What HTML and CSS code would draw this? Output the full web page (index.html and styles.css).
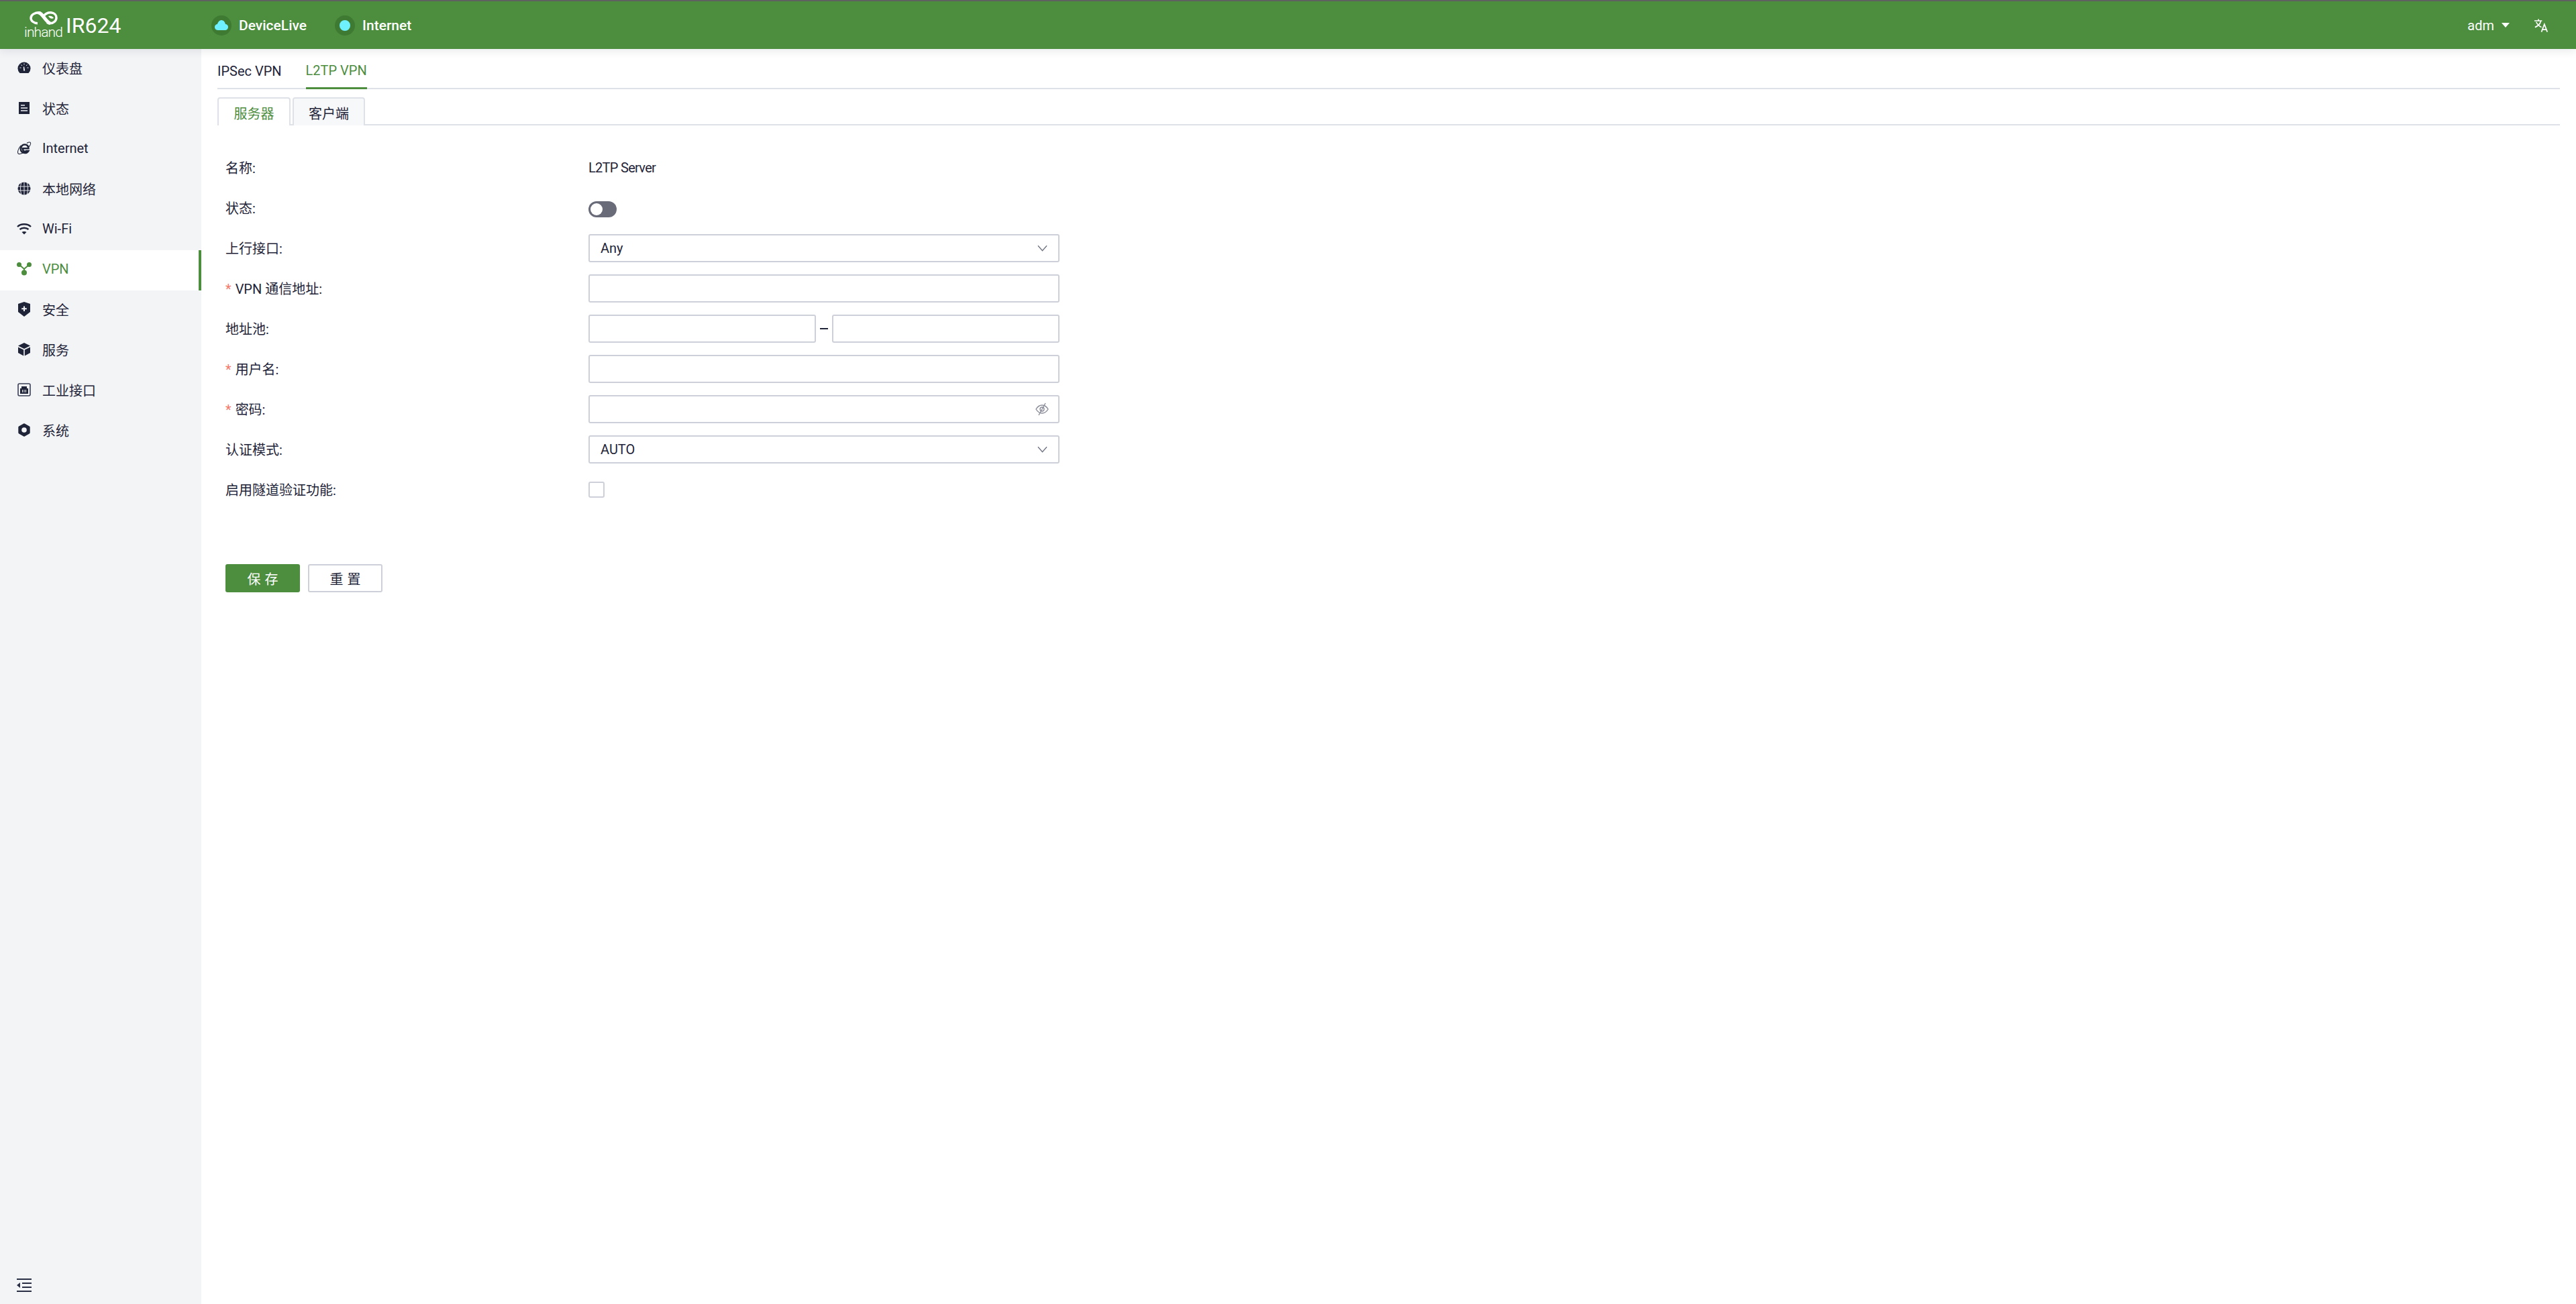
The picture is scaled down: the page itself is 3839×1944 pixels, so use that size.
FILE: index.html
```html
<!DOCTYPE html>
<html lang="zh-CN">
<head>
  <meta charset="UTF-8" />
  <title>IR624</title>
  <link rel="stylesheet" href="styles.css">
</head>
<body>
  <header class="topbar">
    <div class="brand">
      <div class="brand-mark">
        <svg class="brand-knot" viewBox="0 0 42 20" fill="none" stroke="#fff">
          <path d="M15 1.8C8 1.5 2 5 2 10C2 14 6 17.5 12 17.8" stroke-width="3.4"/>
          <path d="M12 1.5C20 2 23 15 31 18" stroke-width="5"/>
          <path d="M21 7C24 3 28 1.5 32 1.8C37 2.2 40 5.5 40 9.5C40 14 36 17.6 31 17.8C29 17.8 27.5 17.4 26 16.5" stroke-width="3.4"/>
          <path d="M28 7C32 6 35 7.5 36 10C33 11.5 30 10.5 28 7Z" fill="#fff" stroke="none"/>
        </svg>
        <span class="brand-word">inhand</span>
      </div>
      <span class="brand-name">IR624</span>
    </div>
    <div class="top-link">
      <span class="top-dot">
        <svg viewBox="0 0 20 16" width="20" height="16"><path d="M5 15 C1 15 0 12 0 10 C0 8 2 6 4 6 C5 2 8 0 10 0 C13 0 15 2 16 6 C18 6 20 8 20 10 C20 13 18 15 15 15Z" fill="#6ff0ff"/></svg>
      </span>
      <span>DeviceLive</span>
    </div>
    <div class="top-link">
      <span class="top-dot"><span class="top-dot-inner"></span></span>
      <span>Internet</span>
    </div>
    <div class="top-right">
      <span class="user">adm</span>
      <span class="caret"></span>
      <svg class="lang" viewBox="0 0 24 22" fill="none" stroke="#fff" stroke-width="1.9">
        <path d="M0 3H13M7 0V3M11 3C10 8 6 12 1 14M3 5C5 9 8 12 12 14"/>
        <path d="M12 22L17 9L22 22M14 18H20" stroke-width="2"/>
      </svg>
    </div>
  </header>

  <div class="layout">
    <aside class="sidebar">
      <nav class="menu">
        <a class="menu-item">
          <svg class="menu-icon" viewBox="0 0 20 20"><path d="M3.5 18A9.5 9.5 0 1 1 16.5 18Z" fill="#1f2438"/><path d="M10 3.5V5.5M3.5 10H5.5M14.5 10H16.5M5.5 5.5L7 7M14.5 5.5L13 7" stroke="#f3f4f6" stroke-width="1"/><path d="M8.8 9L10 8L11.2 14.5H9.2Z" fill="#f3f4f6"/></svg>
          <span>仪表盘</span>
        </a>
        <a class="menu-item">
          <svg class="menu-icon" viewBox="0 0 20 20"><rect x="2" y="1" width="16" height="18" fill="#1f2438"/><path d="M5 6H11M5 10H15M5 14H15" stroke="#f3f4f6" stroke-width="1.6"/></svg>
          <span>状态</span>
        </a>
        <a class="menu-item">
          <svg class="menu-icon" viewBox="0 0 20 20" fill="none"><path d="M6.5 10.2H16.5C16.5 6.5 14 4.5 11 4.5C7.5 4.5 4.8 7.3 4.8 11C4.8 14.7 7.5 17 11 17C13.4 17 15.2 16 16.3 14H13C12.5 14.6 11.8 14.9 11 14.9C9.2 14.9 8 13.4 8 11" stroke="#1f2438" stroke-width="2.6"/><path d="M5 6C2 10 0 15 .8 17.5C1.6 19.5 5 18.5 8 17M14 2.5C16 1 18.8 .3 19.4 1.8C20 3 19 6 17 8" stroke="#1f2438" stroke-width="1.1"/></svg>
          <span>Internet</span>
        </a>
        <a class="menu-item">
          <svg class="menu-icon" viewBox="0 0 20 20"><circle cx="10" cy="10" r="9.5" fill="#1f2438"/><path d="M0 7H20M0 13H20M10 0V20M6 1C4 6 4 14 6 19M14 1C16 6 16 14 14 19" stroke="#f3f4f6" stroke-width=".9" fill="none"/></svg>
          <span>本地网络</span>
        </a>
        <a class="menu-item">
          <svg class="menu-icon" viewBox="0 0 22 18" fill="none" stroke="#1f2438" stroke-width="2.4"><path d="M1 6C6 1 16 1 21 6M4.5 10C8 7 14 7 17.5 10"/><path d="M7.5 14L11 17.5L14.5 14C12.5 12.5 9.5 12.5 7.5 14Z" fill="#1f2438" stroke="none"/></svg>
          <span>Wi-Fi</span>
        </a>
        <a class="menu-item active">
          <svg class="menu-icon" viewBox="0 0 22 20" fill="#4c8d3e"><circle cx="3.5" cy="3.5" r="3.5"/><circle cx="18.5" cy="3.5" r="3.5"/><circle cx="11" cy="15.5" r="4"/><path d="M3.5 3.5L11 10L18.5 3.5M11 10V15" stroke="#4c8d3e" stroke-width="2" fill="none"/></svg>
          <span>VPN</span>
        </a>
        <a class="menu-item">
          <svg class="menu-icon tall" viewBox="0 0 20 22"><path d="M10 0L19 3V15L10 22L1 15V3Z" fill="#1f2438"/><path d="M10 6.5V14M6.2 10.2H13.8" stroke="#f3f4f6" stroke-width="2"/></svg>
          <span>安全</span>
        </a>
        <a class="menu-item">
          <svg class="menu-icon" viewBox="0 0 20 20"><path d="M10 0L19 4.5L10 9L1 4.5Z" fill="#1f2438"/><path d="M1 6.5L9.2 10.5V19.5L1 15Z" fill="#1f2438"/><path d="M19 6.5L10.8 10.5V19.5L19 15Z" fill="#1f2438"/></svg>
          <span>服务</span>
        </a>
        <a class="menu-item">
          <svg class="menu-icon" viewBox="0 0 20 20"><rect x="1" y="1" width="18" height="18" rx="2" fill="none" stroke="#3a3f55" stroke-width="1.6"/><path d="M4 8H6V5H14V8H16V16H4Z" fill="#1f2438"/><path d="M7.5 10V14M10 10V14M12.5 10V14" stroke="#f3f4f6" stroke-width="1"/></svg>
          <span>工业接口</span>
        </a>
        <a class="menu-item">
          <svg class="menu-icon" viewBox="0 0 20 20"><path d="M10 2L17 6V14L10 18L3 14V6Z" fill="#1f2438" stroke="#1f2438" stroke-width="3.4" stroke-linejoin="round"/><circle cx="10" cy="10" r="3.8" fill="#f3f4f6"/></svg>
          <span>系统</span>
        </a>
      </nav>
      <div class="collapse">
        <svg viewBox="0 0 22 20" width="22" height="20" fill="#2a2f45"><rect width="22" height="2"/><rect x="8" y="6" width="14" height="2"/><rect x="8" y="12" width="14" height="2"/><rect y="18" width="22" height="2"/><path d="M0 10L5 6V14Z"/></svg>
      </div>
    </aside>

    <main class="content">
      <div class="tabs">
        <span class="tab">IPSec VPN</span>
        <span class="tab current">L2TP VPN</span>
      </div>
      <div class="subtabs">
        <span class="subtab current">服务器</span>
        <span class="subtab">客户端</span>
      </div>

      <form class="form">
        <div class="row">
          <label class="label">名称:</label>
          <div class="field value">L2TP Server</div>
        </div>
        <div class="row">
          <label class="label">状态:</label>
          <div class="field"><span class="switch"><span class="knob"></span></span></div>
        </div>
        <div class="row">
          <label class="label">上行接口:</label>
          <div class="field">
            <div class="box select">
              <span>Any</span>
              <svg class="chev" viewBox="0 0 16 10" fill="none" stroke="#6d7180" stroke-width="1.4"><path d="M1 1L8 9L15 1"/></svg>
            </div>
          </div>
        </div>
        <div class="row">
          <label class="label"><i class="req">*</i>VPN 通信地址:</label>
          <div class="field"><input class="box" type="text"></div>
        </div>
        <div class="row">
          <label class="label">地址池:</label>
          <div class="field range">
            <input class="box" type="text">
            <span class="dash"></span>
            <input class="box" type="text">
          </div>
        </div>
        <div class="row">
          <label class="label"><i class="req">*</i>用户名:</label>
          <div class="field"><input class="box" type="text"></div>
        </div>
        <div class="row">
          <label class="label"><i class="req">*</i>密码:</label>
          <div class="field">
            <div class="box select">
              <span></span>
              <svg class="eye" viewBox="0 0 20 20" fill="none" stroke="#8a8d99" stroke-width="1.4"><path d="M1 10C4 5 7 4 10 4C13 4 16 5 19 10C16 15 13 16 10 16C7 16 4 15 1 10Z"/><circle cx="10" cy="10" r="3"/><path d="M15 1L5 19"/></svg>
            </div>
          </div>
        </div>
        <div class="row">
          <label class="label">认证模式:</label>
          <div class="field">
            <div class="box select">
              <span>AUTO</span>
              <svg class="chev" viewBox="0 0 16 10" fill="none" stroke="#6d7180" stroke-width="1.4"><path d="M1 1L8 9L15 1"/></svg>
            </div>
          </div>
        </div>
        <div class="row">
          <label class="label">启用隧道验证功能:</label>
          <div class="field"><span class="check"></span></div>
        </div>
        <div class="actions">
          <button class="btn primary" type="button">保 存</button>
          <button class="btn" type="button">重 置</button>
        </div>
      </form>
    </main>
  </div>
</body>
</html>
```
FILE: styles.css
```css
* {
  box-sizing: border-box;
}
html, body {
  height: 100%;
}
body {
  margin: 0;
  display: flex;
  flex-direction: column;
  overflow: hidden;
  background: #fff;
  color: #1f2438;
  font-family: Roboto, "Noto Sans CJK SC", sans-serif;
  font-size: 20px;
}

/* top bar */
.topbar {
  height: 73px;
  flex-shrink: 0;
  display: flex;
  align-items: center;
  padding-right: 41px;
  background: #4c8d3e;
  border-top: 2px solid #5f6160;
  color: #fff;
  position: relative;
  z-index: 2;
  box-shadow: 0 3px 12px rgba(30, 40, 60, 0.1);
}
.brand {
  width: 315px;
  display: flex;
  align-items: center;
  padding-left: 39px;
  gap: 8px;
}
.brand-mark {
  width: 51px;
  display: flex;
  flex-direction: column;
  align-items: center;
}
.brand-knot {
  width: 42px;
  height: 20px;
}
.brand-word {
  font-size: 21px;
  font-weight: 300;
  line-height: 22px;
  letter-spacing: -0.9px;
  white-space: nowrap;
}
.brand-name {
  font-size: 32px;
  line-height: 1;
}
.top-link {
  display: flex;
  align-items: center;
  gap: 11px;
  margin-right: 42px;
  font-size: 21px;
  font-weight: 500;
}
.top-dot {
  width: 30px;
  height: 30px;
  border-radius: 50%;
  background: #3f7a33;
  display: flex;
  align-items: center;
  justify-content: center;
}
.top-dot-inner {
  width: 16px;
  height: 16px;
  border-radius: 50%;
  background: #6ff0ff;
}
.top-right {
  margin-left: auto;
  display: flex;
  align-items: center;
}
.caret {
  margin-left: 11px;
  border-left: 6px solid transparent;
  border-right: 6px solid transparent;
  border-top: 7px solid #fff;
}
.lang {
  margin-left: 37px;
  width: 21px;
  height: 20px;
}

/* sidebar */
.layout {
  flex: 1;
  display: flex;
  min-height: 0;
}
.sidebar {
  width: 300px;
  flex-shrink: 0;
  display: flex;
  flex-direction: column;
  justify-content: space-between;
  background: #f3f4f6;
}
.menu-item {
  height: 60px;
  display: flex;
  align-items: center;
  padding: 0 0 4px 25px;
  gap: 16px;
}
.menu-icon {
  width: 22px;
  height: 20px;
  flex-shrink: 0;
}
.menu-icon.tall {
  height: 22px;
}
.menu-item.active {
  background: #fff;
  color: #4c8d3e;
  border-right: 4px solid #4c8d3e;
}
.collapse {
  padding: 0 0 18px 25px;
  line-height: 0;
}

/* tabs */
.content {
  flex: 1;
  padding: 0 24px;
}
.tabs {
  display: flex;
  gap: 36px;
  height: 60px;
  border-bottom: 2px solid #dfe1e8;
}
.tab {
  display: flex;
  align-items: center;
  height: 60px;
  padding-top: 6px;
}
.tab.current {
  color: #4c8d3e;
  border-bottom: 3px solid #4c8d3e;
}
.subtabs {
  display: flex;
  gap: 3px;
  margin-top: 12px;
  height: 42px;
  border-bottom: 2px solid #dfe1e8;
}
.subtab {
  width: 108px;
  height: 42px;
  display: flex;
  align-items: center;
  justify-content: center;
  padding-top: 3px;
  background: #f7f8fa;
  border: 2px solid #dfe1e8;
  border-bottom: 0;
  border-radius: 4px 4px 0 0;
}
.subtab.current {
  width: 109px;
  background: #fff;
  color: #4c8d3e;
}

/* form */
.form {
  padding: 33px 0 0 12px;
}
.row {
  display: flex;
  align-items: center;
  height: 60px;
}
.label {
  width: 541px;
  flex-shrink: 0;
  padding-bottom: 2px;
}
.req {
  color: #f4796b;
  font-style: normal;
  margin-right: 6px;
}
.field {
  width: 702px;
}
.value {
  letter-spacing: -0.7px;
}
.box {
  display: block;
  width: 100%;
  height: 42px;
  background: #fff;
  border: 2px solid #cdd0d9;
  border-radius: 3px;
  outline: none;
}
.select {
  display: flex;
  align-items: center;
  justify-content: space-between;
  padding: 0 16px;
}
.chev {
  width: 15px;
  height: 10px;
}
.eye {
  width: 20px;
  height: 20px;
  margin-right: -2px;
}
.range {
  display: flex;
  align-items: center;
}
.dash {
  width: 12px;
  height: 2px;
  margin: 0 6px;
  flex-shrink: 0;
  background: #1f2438;
}
.switch {
  display: block;
  width: 42px;
  height: 24px;
  margin-top: 4px;
  padding: 3px;
  border-radius: 12px;
  background: #696b79;
}
.knob {
  display: block;
  width: 18px;
  height: 18px;
  border-radius: 50%;
  background: #fff;
}
.check {
  display: block;
  width: 24px;
  height: 24px;
  border: 2px solid #cdd0d9;
  border-radius: 3px;
}
.actions {
  display: flex;
  gap: 12px;
  margin-top: 81px;
}
.btn {
  width: 111px;
  height: 42px;
  background: #fff;
  border: 2px solid #cdd0d9;
  border-radius: 3px;
  color: #1f2438;
  font: inherit;
  word-spacing: 1px;
}
.btn.primary {
  background: #4c8d3e;
  border-color: #4c8d3e;
  color: #fff;
}
```
